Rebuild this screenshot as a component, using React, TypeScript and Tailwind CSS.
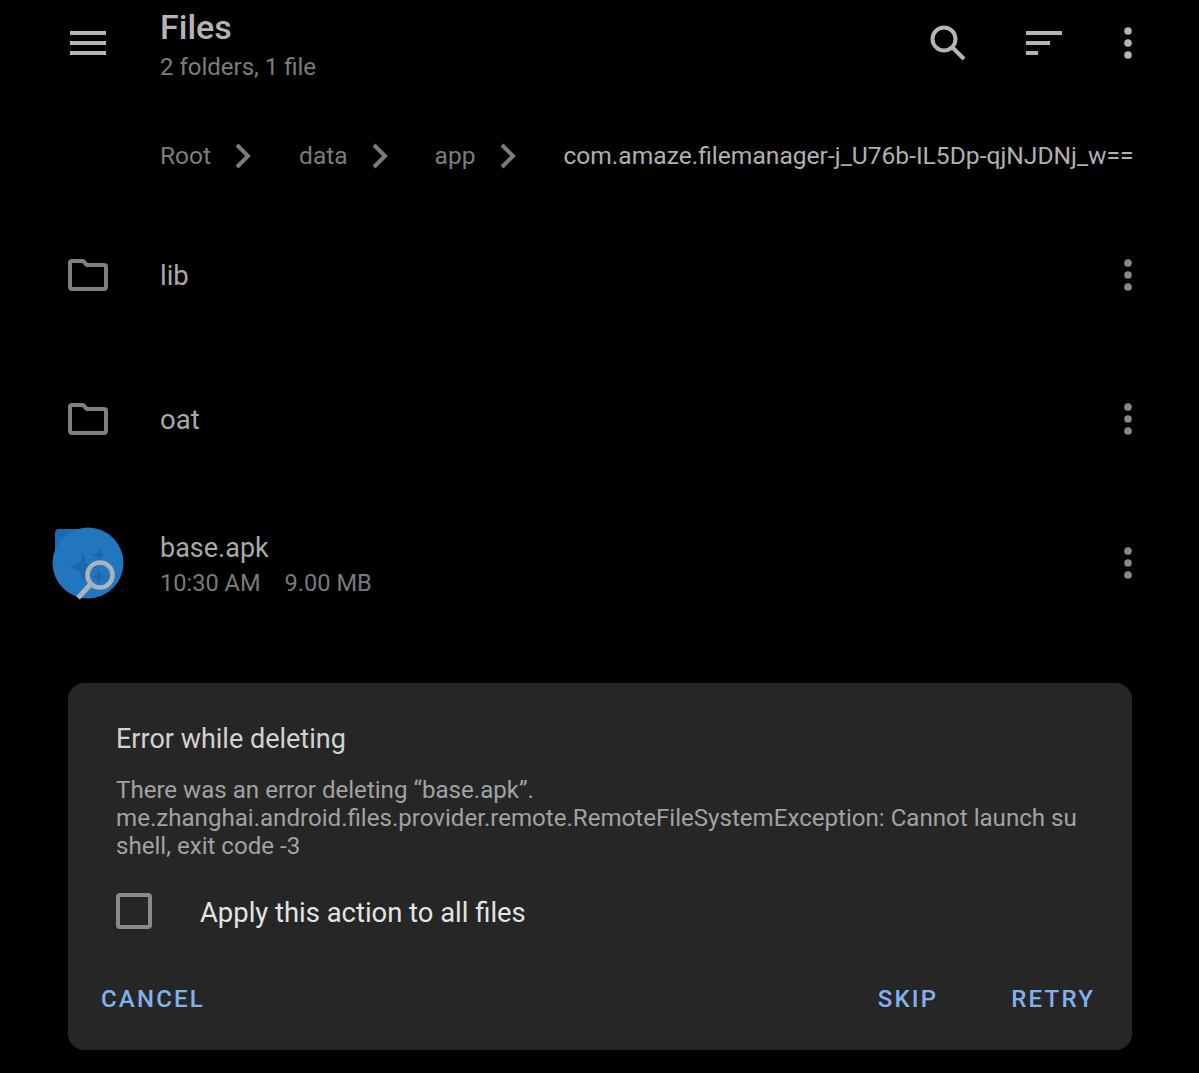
import React from "react";

const font = { fontFamily: "Roboto, sans-serif" };

const Dots = ({ color = "#8a8a8a" }: { color?: string }) => (
  <svg width="8" height="32" viewBox="0 0 8 32" fill={color}>
    <circle cx="4" cy="4" r="3.8" />
    <circle cx="4" cy="16" r="3.8" />
    <circle cx="4" cy="28" r="3.8" />
  </svg>
);

const Chevron = () => (
  <svg width="16" height="26" viewBox="0 0 16 26" fill="none" stroke="#7c7c7c" strokeWidth="4">
    <path d="M2 2l11 11L2 24" />
  </svg>
);

const Folder = () => (
  <svg width="40" height="32" viewBox="0 0 40 32" fill="none" stroke="#7f7f7f" strokeWidth="4" strokeLinejoin="round">
    <path d="M2 4a2 2 0 0 1 2-2h11l4 4h17a2 2 0 0 1 2 2v20a2 2 0 0 1-2 2H4a2 2 0 0 1-2-2z" />
  </svg>
);

const ApkIcon = () => (
  <svg width="72" height="74" viewBox="0 0 72 74">
    <path d="M3 6a4 4 0 0 1 4-4h22v30H3z" fill="#1a6cb0" />
    <circle cx="36" cy="36" r="35.5" fill="#2276bd" />
    <path d="M31 26l3.5 10.5L45 40l-10.5 3.5L31 54l-3.5-10.5L17 40l10.5-3.5z" fill="#1c68ab" />
    <path d="M47 21l2 5 5 2-5 2-2 5-2-5-5-2 5-2z" fill="#1c68ab" />
    <path d="M47 43l2 5 5 2-5 2-2 5-2-5-5-2 5-2z" fill="#1c68ab" />
    <circle cx="48" cy="48" r="12.5" fill="none" stroke="#a9b4bb" strokeWidth="4.5" />
    <path d="M38 58L26 71" stroke="#a9b4bb" strokeWidth="5" />
  </svg>
);

const FileRow = ({ name, h }: { name: string; h: string }) => (
  <div className={`flex items-center ${h}`}>
    <div className="w-[92px] pl-[68px] shrink-0 box-content flex"><Folder /></div>
    <div className="flex-1 pt-[2px] text-[27.5px] text-[#a9a9a9]">{name}</div>
    <Dots />
  </div>
);

export default function App() {
  return (
    <div className="w-[1199px] h-[1073px] bg-black overflow-hidden" style={font}>
      {/* toolbar */}
      <div className="flex items-start h-[87px] pr-[67px]">
        <div className="w-[160px] pl-[70px] pt-[31px] shrink-0">
          <div className="flex flex-col gap-[6px] w-[36px]">
            <div className="h-[4px] bg-[#b5b5b5]" />
            <div className="h-[4px] bg-[#b5b5b5]" />
            <div className="h-[4px] bg-[#b5b5b5]" />
          </div>
        </div>
        <div className="flex-1 pt-[8px]">
          <div className="text-[34px] leading-[39px] font-medium text-[#b4b4b4]">Files</div>
          <div className="text-[24px] leading-[28px] mt-[6px] text-[#7d7d7d]">2 folders, 1 file</div>
        </div>
        <div className="flex items-start pt-[25px]">
          <svg width="36" height="36" viewBox="0 0 36 36" fill="none" stroke="#b5b5b5" strokeWidth="4">
            <circle cx="14" cy="14" r="11.5" />
            <path d="M22 22l12 12" />
          </svg>
          <div className="ml-[60px] mt-[6px] flex flex-col gap-[6px] w-[36px]">
            <div className="h-[4px] w-[36px] bg-[#b5b5b5]" />
            <div className="h-[4px] w-[24px] bg-[#b5b5b5]" />
            <div className="h-[4px] w-[12px] bg-[#b5b5b5]" />
          </div>
          <div className="ml-[62px] mt-[2px]"><Dots color="#b5b5b5" /></div>
        </div>
      </div>

      {/* breadcrumb */}
      <div className="flex items-center h-[36px] mt-[51px] pl-[160px] text-[24.5px] text-[#7c7c7c] whitespace-nowrap">
        <span>Root</span>
        <span className="ml-[24px]"><Chevron /></span>
        <span className="ml-[48px]">data</span>
        <span className="ml-[24px]"><Chevron /></span>
        <span className="ml-[47px]">app</span>
        <span className="ml-[25px]"><Chevron /></span>
        <span className="ml-[47px] text-[24.6px] text-[#b0b0b0]">com.amaze.filemanager-j_U76b-IL5Dp-qjNJDNj_w==</span>
      </div>

      {/* list */}
      <div className="mt-[29px] pr-[67px]">
        <FileRow name="lib" h="h-[144px]" />
        <FileRow name="oat" h="h-[144px]" />
        <div className="flex items-center h-[144px]">
          <div className="w-[160px] pl-[52px] pt-[1px] shrink-0"><ApkIcon /></div>
          <div className="flex-1 pt-[4px]">
            <div className="text-[27px] leading-[32px] text-[#a9a9a9]">base.apk</div>
            <div className="flex gap-[24px] mt-[3px] text-[23.6px] leading-[32px] text-[#7a7a7a]">
              <span>10:30 AM</span>
              <span>9.00 MB</span>
            </div>
          </div>
          <Dots />
        </div>
      </div>

      {/* dialog */}
      <div className="ml-[68px] mr-[67px] mt-[48px] h-[367px] rounded-[16px] bg-[#262626] pt-[39px]">
        <div className="pl-[48px] text-[27px] leading-[34px] text-[#d2d2d2]">Error while deleting</div>
        <div className="pl-[48px] pr-[40px] mt-[20px] text-[24.1px] leading-[28px] text-[#a2a2a2]">
          There was an error deleting “base.apk”.
          <br />
          me.zhanghai.android.files.provider.remote.RemoteFileSystemException: Cannot launch su
          <br />
          shell, exit code -3
        </div>
        <div className="flex items-center pl-[48px] mt-[31px]">
          <div className="w-[36px] h-[36px] rounded-[4px] border-[4px] border-[#8a8a8a]" />
          <div className="ml-[48px] pt-[4px] text-[27.4px] leading-[36px] text-[#e4e4e4]">Apply this action to all files</div>
        </div>
        <div className="flex items-center mt-[54px] pl-[33px] pr-[37px] text-[24px] leading-[28px] font-medium tracking-[2.2px] text-[#82b1ee]">
          <span>CANCEL</span>
          <span className="ml-auto">SKIP</span>
          <span className="ml-[73px]">RETRY</span>
        </div>
      </div>
    </div>
  );
}
